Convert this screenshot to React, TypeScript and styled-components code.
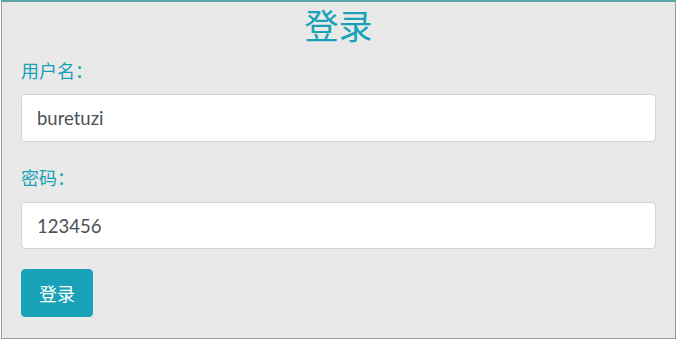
import styled, { createGlobalStyle } from 'styled-components'

const teal = '#17a2b8'

const Global = createGlobalStyle`
    html, body {
        margin: 0;
        padding: 0;
        background: #ffffff;
    }
    body {
        font-family: Lato, "Noto Sans CJK SC", sans-serif;
    }
`

const Panel = styled.form`
    box-sizing: border-box;
    width: 675px;
    height: 339px;
    margin-left: 1px;
    padding: 0 19px;
    background: #e9e9e9;
    border: 1px solid #9a9a9a;
    border-top: 2px solid #5ba5a8;
    display: flex;
    flex-direction: column;
    align-items: flex-start;
`

const Title = styled.h2`
    align-self: stretch;
    margin: 5px 0 0;
    font-size: 34px;
    line-height: 38px;
    font-weight: 400;
    text-align: center;
    color: ${teal};
`

const Label = styled.label<{ $top: number }>`
    margin-top: ${(p) => p.$top}px;
    font-size: 18px;
    line-height: 27px;
    color: ${teal};
`

const Input = styled.input<{ $top: number; $h: number }>`
    box-sizing: border-box;
    width: 100%;
    height: ${(p) => p.$h}px;
    margin: ${(p) => p.$top}px 0 0;
    padding: 0 15px;
    font-family: inherit;
    font-size: 18.5px;
    color: #495057;
    background: #ffffff;
    border: 1px solid #ced4da;
    border-radius: 4px;
    outline: none;
`

const Button = styled.button`
    box-sizing: border-box;
    height: 48px;
    margin-top: 20px;
    padding: 0 17px;
    font-family: inherit;
    font-size: 18px;
    color: #ffffff;
    background: ${teal};
    border: 1px solid ${teal};
    border-radius: 4px;
`

export default function App() {
    return (
        <>
            <Global />
            <Panel onSubmit={(e) => e.preventDefault()}>
                <Title>登录</Title>
                <Label $top={13}>用户名：</Label>
                <Input $top={9} $h={48} defaultValue="buretuzi" />
                <Label $top={23}>密码：</Label>
                <Input $top={10} $h={47} defaultValue="123456" />
                <Button type="submit">登录</Button>
            </Panel>
        </>
    )
}
